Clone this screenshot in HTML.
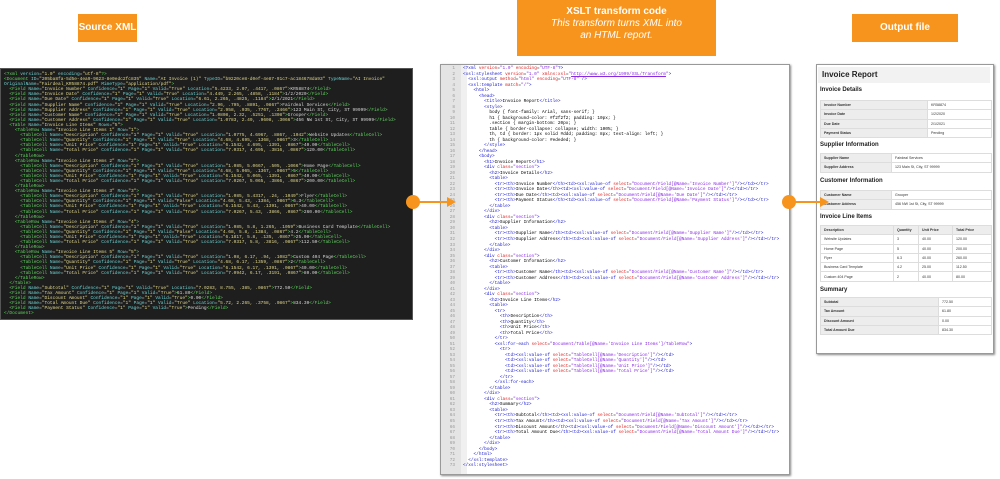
<!DOCTYPE html>
<html><head><meta charset="utf-8"><style>
*{margin:0;padding:0;box-sizing:border-box}
body{width:1000px;height:479px;background:#fff;position:relative;overflow:hidden;font-family:"Liberation Sans",sans-serif}
.btn{position:absolute;background:#f7941d;color:#fff;text-align:center;font-weight:bold;font-family:"Liberation Sans",sans-serif}
#src{left:0;top:68px;width:413px;height:252px;background:#1e1e1e;border:1px solid #555;padding:3px 0 0 3px;font-family:"Liberation Mono",monospace;font-size:4.5px;line-height:5.1px;color:#d8d8d8;white-space:pre;overflow:hidden}
#src .t{color:#5fd35f}#src .a{color:#6ccfcf}#src .v{color:#e0d78a}
#mid{left:440px;top:64px;width:350px;height:411px;background:#fff;border:1px solid #999;box-shadow:1px 1px 2px #888;overflow:hidden}
#gut{position:absolute;left:0;top:0;width:20px;height:100%;background:#e4e4e4}
#fold{position:absolute;left:20px;top:0;width:6px;height:100%;background:#f0f0f0}
#code{position:absolute;left:0;top:1px;font-family:"Liberation Mono",monospace;font-size:4.4px;line-height:5.52px;white-space:pre;color:#000}
#code .n{display:inline-block;width:14px;text-align:right;color:#999;margin-right:8px}
#code .t{color:#2020d0}#code .a{color:#e02020}#code .v{color:#8a2be2}
#out{left:816px;top:64px;width:178px;height:290px;background:#fff;border:1px solid #999;box-shadow:1px 1px 2px #888}
.abs{position:absolute}
h1{position:absolute;left:818px;top:67px;width:172px;height:16px;background:#f2f2f2;font-size:8px;font-weight:bold;padding:3px 0 0 4px;color:#222}
h2{position:absolute;left:820px;font-size:6px;font-weight:bold;color:#222}
table{position:absolute;left:820px;width:172px;border-collapse:collapse;font-size:3.6px}
td,th{border:0.5px solid #ddd;height:9.3px;padding:0 0 0 3px;text-align:left;font-weight:normal;color:#333}
th{background:#ededed;font-weight:bold}
</style></head><body>
<div class="btn" style="left:78px;top:14px;width:59px;height:28px;font-size:10px;line-height:28px">Source XML</div>
<div class="btn" style="left:517px;top:0;width:199px;height:56px;font-size:10px;line-height:12px;padding-top:6px">XSLT transform code<br><span style="font-weight:normal;font-style:italic">This transform turns XML into<br>an HTML report.</span></div>
<div class="btn" style="left:852px;top:14px;width:106px;height:28px;font-size:10px;line-height:28px">Output file</div>

<div id="src" class="abs"><span class="t">&lt;?xml</span> <span class="a">version</span>=<span class="v">"1.0"</span> <span class="a">encoding</span>=<span class="v">"utf-8"</span><span class="t">?&gt;</span>
<span class="t">&lt;Document</span> <span class="a">ID</span>=<span class="v">"205ba8fa-5d5e-4ea9-9623-8e0edc2fc835"</span> <span class="a">Name</span>=<span class="v">"AI Invoice (1)"</span> <span class="a">TypeID</span>=<span class="v">"b9220ce8-d0ef-4e87-91c7-ac184678da93"</span> <span class="a">TypeName</span>=<span class="v">"AI Invoice"</span>
<span class="a">OriginalName</span>=<span class="v">"Fairdeal_KR58874.pdf"</span> <span class="a">MimeType</span>=<span class="v">"application/pdf"</span><span class="t">&gt;</span>
  <span class="t">&lt;Field</span> <span class="a">Name</span>=<span class="v">"Invoice Number"</span> <span class="a">Confidence</span>=<span class="v">"1"</span> <span class="a">Page</span>=<span class="v">"1"</span> <span class="a">Valid</span>=<span class="v">"True"</span> <span class="a">Location</span>=<span class="v">"5.4233, 2.07, .4417, .0867"</span><span class="t">&gt;</span>KR58874<span class="t">&lt;/Field&gt;</span>
  <span class="t">&lt;Field</span> <span class="a">Name</span>=<span class="v">"Invoice Date"</span> <span class="a">Confidence</span>=<span class="v">"1"</span> <span class="a">Page</span>=<span class="v">"1"</span> <span class="a">Valid</span>=<span class="v">"True"</span> <span class="a">Location</span>=<span class="v">"4.449, 2.265, .4858, .1184"</span><span class="t">&gt;</span>1/2/2020<span class="t">&lt;/Field&gt;</span>
  <span class="t">&lt;Field</span> <span class="a">Name</span>=<span class="v">"Due Date"</span> <span class="a">Confidence</span>=<span class="v">"1"</span> <span class="a">Page</span>=<span class="v">"1"</span> <span class="a">Valid</span>=<span class="v">"True"</span> <span class="a">Location</span>=<span class="v">"6.61, 2.265, .4825, .1184"</span><span class="t">&gt;</span>2/1/2021<span class="t">&lt;/Field&gt;</span>
  <span class="t">&lt;Field</span> <span class="a">Name</span>=<span class="v">"Supplier Name"</span> <span class="a">Confidence</span>=<span class="v">"1"</span> <span class="a">Page</span>=<span class="v">"1"</span> <span class="a">Valid</span>=<span class="v">"True"</span> <span class="a">Location</span>=<span class="v">"2.96, .795, .8891, .0867"</span><span class="t">&gt;</span>Fairdeal Services<span class="t">&lt;/Field&gt;</span>
  <span class="t">&lt;Field</span> <span class="a">Name</span>=<span class="v">"Supplier Address"</span> <span class="a">Confidence</span>=<span class="v">"1"</span> <span class="a">Page</span>=<span class="v">"1"</span> <span class="a">Valid</span>=<span class="v">"True"</span> <span class="a">Location</span>=<span class="v">"2.958, .935, .7767, .2466"</span><span class="t">&gt;</span>123 Main St, City, ST 99999<span class="t">&lt;/Field&gt;</span>
  <span class="t">&lt;Field</span> <span class="a">Name</span>=<span class="v">"Customer Name"</span> <span class="a">Confidence</span>=<span class="v">"1"</span> <span class="a">Page</span>=<span class="v">"1"</span> <span class="a">Valid</span>=<span class="v">"True"</span> <span class="a">Location</span>=<span class="v">"1.0808, 2.32, .5251, .1308"</span><span class="t">&gt;</span>Grooper<span class="t">&lt;/Field&gt;</span>
  <span class="t">&lt;Field</span> <span class="a">Name</span>=<span class="v">"Customer Address"</span> <span class="a">Confidence</span>=<span class="v">"1"</span> <span class="a">Page</span>=<span class="v">"1"</span> <span class="a">Valid</span>=<span class="v">"True"</span> <span class="a">Location</span>=<span class="v">"1.0783, 2.49, .9608, .3066"</span><span class="t">&gt;</span>456 NW 1st St, City, ST 99999<span class="t">&lt;/Field&gt;</span>
  <span class="t">&lt;Table</span> <span class="a">Name</span>=<span class="v">"Invoice Line Items"</span> <span class="a">Rows</span>=<span class="v">"5"</span><span class="t">&gt;</span>
    <span class="t">&lt;TableRow</span> <span class="a">Name</span>=<span class="v">"Invoice Line Items 1"</span> <span class="a">Row</span>=<span class="v">"1"</span><span class="t">&gt;</span>
      <span class="t">&lt;TableCell</span> <span class="a">Name</span>=<span class="v">"Description"</span> <span class="a">Confidence</span>=<span class="v">"1"</span> <span class="a">Page</span>=<span class="v">"1"</span> <span class="a">Valid</span>=<span class="v">"True"</span> <span class="a">Location</span>=<span class="v">"1.0775, 4.6967, .8867, .1042"</span><span class="t">&gt;</span>Website Updates<span class="t">&lt;/TableCell&gt;</span>
      <span class="t">&lt;TableCell</span> <span class="a">Name</span>=<span class="v">"Quantity"</span> <span class="a">Confidence</span>=<span class="v">"1"</span> <span class="a">Page</span>=<span class="v">"1"</span> <span class="a">Valid</span>=<span class="v">"True"</span> <span class="a">Location</span>=<span class="v">"4.68, 4.695, .1368, .0867"</span><span class="t">&gt;</span>3<span class="t">&lt;/TableCell&gt;</span>
      <span class="t">&lt;TableCell</span> <span class="a">Name</span>=<span class="v">"Unit Price"</span> <span class="a">Confidence</span>=<span class="v">"1"</span> <span class="a">Page</span>=<span class="v">"1"</span> <span class="a">Valid</span>=<span class="v">"True"</span> <span class="a">Location</span>=<span class="v">"6.1542, 4.695, .1391, .0867"</span><span class="t">&gt;</span>40.00<span class="t">&lt;/TableCell&gt;</span>
      <span class="t">&lt;TableCell</span> <span class="a">Name</span>=<span class="v">"Total Price"</span> <span class="a">Confidence</span>=<span class="v">"1"</span> <span class="a">Page</span>=<span class="v">"1"</span> <span class="a">Valid</span>=<span class="v">"True"</span> <span class="a">Location</span>=<span class="v">"7.0317, 4.695, .3816, .0867"</span><span class="t">&gt;</span>120.00<span class="t">&lt;/TableCell&gt;</span>
    <span class="t">&lt;/TableRow&gt;</span>
    <span class="t">&lt;TableRow</span> <span class="a">Name</span>=<span class="v">"Invoice Line Items 2"</span> <span class="a">Row</span>=<span class="v">"2"</span><span class="t">&gt;</span>
      <span class="t">&lt;TableCell</span> <span class="a">Name</span>=<span class="v">"Description"</span> <span class="a">Confidence</span>=<span class="v">"1"</span> <span class="a">Page</span>=<span class="v">"1"</span> <span class="a">Valid</span>=<span class="v">"True"</span> <span class="a">Location</span>=<span class="v">"1.085, 5.0667, .505, .1066"</span><span class="t">&gt;</span>Home Page<span class="t">&lt;/TableCell&gt;</span>
      <span class="t">&lt;TableCell</span> <span class="a">Name</span>=<span class="v">"Quantity"</span> <span class="a">Confidence</span>=<span class="v">"1"</span> <span class="a">Page</span>=<span class="v">"1"</span> <span class="a">Valid</span>=<span class="v">"True"</span> <span class="a">Location</span>=<span class="v">"4.68, 5.065, .1367, .0867"</span><span class="t">&gt;</span>5<span class="t">&lt;/TableCell&gt;</span>
      <span class="t">&lt;TableCell</span> <span class="a">Name</span>=<span class="v">"Unit Price"</span> <span class="a">Confidence</span>=<span class="v">"1"</span> <span class="a">Page</span>=<span class="v">"1"</span> <span class="a">Valid</span>=<span class="v">"True"</span> <span class="a">Location</span>=<span class="v">"6.1542, 5.065, .1391, .0867"</span><span class="t">&gt;</span>40.00<span class="t">&lt;/TableCell&gt;</span>
      <span class="t">&lt;TableCell</span> <span class="a">Name</span>=<span class="v">"Total Price"</span> <span class="a">Confidence</span>=<span class="v">"1"</span> <span class="a">Page</span>=<span class="v">"1"</span> <span class="a">Valid</span>=<span class="v">"True"</span> <span class="a">Location</span>=<span class="v">"7.0267, 5.065, .3866, .0867"</span><span class="t">&gt;</span>200.00<span class="t">&lt;/TableCell&gt;</span>
    <span class="t">&lt;/TableRow&gt;</span>
    <span class="t">&lt;TableRow</span> <span class="a">Name</span>=<span class="v">"Invoice Line Items 3"</span> <span class="a">Row</span>=<span class="v">"3"</span><span class="t">&gt;</span>
      <span class="t">&lt;TableCell</span> <span class="a">Name</span>=<span class="v">"Description"</span> <span class="a">Confidence</span>=<span class="v">"1"</span> <span class="a">Page</span>=<span class="v">"1"</span> <span class="a">Valid</span>=<span class="v">"True"</span> <span class="a">Location</span>=<span class="v">"1.085, 5.4317, .24, .1049"</span><span class="t">&gt;</span>Flyer<span class="t">&lt;/TableCell&gt;</span>
      <span class="t">&lt;TableCell</span> <span class="a">Name</span>=<span class="v">"Quantity"</span> <span class="a">Confidence</span>=<span class="v">"1"</span> <span class="a">Page</span>=<span class="v">"1"</span> <span class="a">Valid</span>=<span class="v">"False"</span> <span class="a">Location</span>=<span class="v">"4.68, 5.43, .1384, .0867"</span><span class="t">&gt;</span>6.3<span class="t">&lt;/TableCell&gt;</span>
      <span class="t">&lt;TableCell</span> <span class="a">Name</span>=<span class="v">"Unit Price"</span> <span class="a">Confidence</span>=<span class="v">"1"</span> <span class="a">Page</span>=<span class="v">"1"</span> <span class="a">Valid</span>=<span class="v">"True"</span> <span class="a">Location</span>=<span class="v">"6.1542, 5.43, .1391, .0867"</span><span class="t">&gt;</span>40.00<span class="t">&lt;/TableCell&gt;</span>
      <span class="t">&lt;TableCell</span> <span class="a">Name</span>=<span class="v">"Total Price"</span> <span class="a">Confidence</span>=<span class="v">"1"</span> <span class="a">Page</span>=<span class="v">"1"</span> <span class="a">Valid</span>=<span class="v">"True"</span> <span class="a">Location</span>=<span class="v">"7.0267, 5.43, .3866, .0867"</span><span class="t">&gt;</span>260.00<span class="t">&lt;/TableCell&gt;</span>
    <span class="t">&lt;/TableRow&gt;</span>
    <span class="t">&lt;TableRow</span> <span class="a">Name</span>=<span class="v">"Invoice Line Items 4"</span> <span class="a">Row</span>=<span class="v">"4"</span><span class="t">&gt;</span>
      <span class="t">&lt;TableCell</span> <span class="a">Name</span>=<span class="v">"Description"</span> <span class="a">Confidence</span>=<span class="v">"1"</span> <span class="a">Page</span>=<span class="v">"1"</span> <span class="a">Valid</span>=<span class="v">"True"</span> <span class="a">Location</span>=<span class="v">"1.085, 5.8, 1.265, .1059"</span><span class="t">&gt;</span>Business Card Template<span class="t">&lt;/TableCell&gt;</span>
      <span class="t">&lt;TableCell</span> <span class="a">Name</span>=<span class="v">"Quantity"</span> <span class="a">Confidence</span>=<span class="v">"1"</span> <span class="a">Page</span>=<span class="v">"1"</span> <span class="a">Valid</span>=<span class="v">"False"</span> <span class="a">Location</span>=<span class="v">"4.68, 5.8, .1384, .0867"</span><span class="t">&gt;</span>4.2<span class="t">&lt;/TableCell&gt;</span>
      <span class="t">&lt;TableCell</span> <span class="a">Name</span>=<span class="v">"Unit Price"</span> <span class="a">Confidence</span>=<span class="v">"1"</span> <span class="a">Page</span>=<span class="v">"1"</span> <span class="a">Valid</span>=<span class="v">"True"</span> <span class="a">Location</span>=<span class="v">"6.1817, 5.8, .135, .0867"</span><span class="t">&gt;</span>25.00<span class="t">&lt;/TableCell&gt;</span>
      <span class="t">&lt;TableCell</span> <span class="a">Name</span>=<span class="v">"Total Price"</span> <span class="a">Confidence</span>=<span class="v">"1"</span> <span class="a">Page</span>=<span class="v">"1"</span> <span class="a">Valid</span>=<span class="v">"True"</span> <span class="a">Location</span>=<span class="v">"7.0317, 5.8, .3816, .0867"</span><span class="t">&gt;</span>112.50<span class="t">&lt;/TableCell&gt;</span>
    <span class="t">&lt;/TableRow&gt;</span>
    <span class="t">&lt;TableRow</span> <span class="a">Name</span>=<span class="v">"Invoice Line Items 5"</span> <span class="a">Row</span>=<span class="v">"5"</span><span class="t">&gt;</span>
      <span class="t">&lt;TableCell</span> <span class="a">Name</span>=<span class="v">"Description"</span> <span class="a">Confidence</span>=<span class="v">"1"</span> <span class="a">Page</span>=<span class="v">"1"</span> <span class="a">Valid</span>=<span class="v">"True"</span> <span class="a">Location</span>=<span class="v">"1.08, 6.17, .94, .1082"</span><span class="t">&gt;</span>Custom 404 Page<span class="t">&lt;/TableCell&gt;</span>
      <span class="t">&lt;TableCell</span> <span class="a">Name</span>=<span class="v">"Quantity"</span> <span class="a">Confidence</span>=<span class="v">"1"</span> <span class="a">Page</span>=<span class="v">"1"</span> <span class="a">Valid</span>=<span class="v">"True"</span> <span class="a">Location</span>=<span class="v">"4.68, 6.17, .1359, .0867"</span><span class="t">&gt;</span>2<span class="t">&lt;/TableCell&gt;</span>
      <span class="t">&lt;TableCell</span> <span class="a">Name</span>=<span class="v">"Unit Price"</span> <span class="a">Confidence</span>=<span class="v">"1"</span> <span class="a">Page</span>=<span class="v">"1"</span> <span class="a">Valid</span>=<span class="v">"True"</span> <span class="a">Location</span>=<span class="v">"6.1542, 6.17, .1391, .0867"</span><span class="t">&gt;</span>40.00<span class="t">&lt;/TableCell&gt;</span>
      <span class="t">&lt;TableCell</span> <span class="a">Name</span>=<span class="v">"Total Price"</span> <span class="a">Confidence</span>=<span class="v">"1"</span> <span class="a">Page</span>=<span class="v">"1"</span> <span class="a">Valid</span>=<span class="v">"True"</span> <span class="a">Location</span>=<span class="v">"7.0942, 6.17, .3191, .0867"</span><span class="t">&gt;</span>80.00<span class="t">&lt;/TableCell&gt;</span>
    <span class="t">&lt;/TableRow&gt;</span>
  <span class="t">&lt;/Table&gt;</span>
  <span class="t">&lt;Field</span> <span class="a">Name</span>=<span class="v">"Subtotal"</span> <span class="a">Confidence</span>=<span class="v">"1"</span> <span class="a">Page</span>=<span class="v">"1"</span> <span class="a">Valid</span>=<span class="v">"True"</span> <span class="a">Location</span>=<span class="v">"7.0283, 8.755, .385, .0867"</span><span class="t">&gt;</span>772.50<span class="t">&lt;/Field&gt;</span>
  <span class="t">&lt;Field</span> <span class="a">Name</span>=<span class="v">"Tax Amount"</span> <span class="a">Confidence</span>=<span class="v">"1"</span> <span class="a">Page</span>=<span class="v">"1"</span> <span class="a">Valid</span>=<span class="v">"True"</span><span class="t">&gt;</span>61.80<span class="t">&lt;/Field&gt;</span>
  <span class="t">&lt;Field</span> <span class="a">Name</span>=<span class="v">"Discount Amount"</span> <span class="a">Confidence</span>=<span class="v">"1"</span> <span class="a">Page</span>=<span class="v">"1"</span> <span class="a">Valid</span>=<span class="v">"True"</span><span class="t">&gt;</span>0.00<span class="t">&lt;/Field&gt;</span>
  <span class="t">&lt;Field</span> <span class="a">Name</span>=<span class="v">"Total Amount Due"</span> <span class="a">Confidence</span>=<span class="v">"1"</span> <span class="a">Page</span>=<span class="v">"1"</span> <span class="a">Valid</span>=<span class="v">"True"</span> <span class="a">Location</span>=<span class="v">"5.72, 2.265, .3758, .0867"</span><span class="t">&gt;</span>834.30<span class="t">&lt;/Field&gt;</span>
  <span class="t">&lt;Field</span> <span class="a">Name</span>=<span class="v">"Payment Status"</span> <span class="a">Confidence</span>=<span class="v">"1"</span> <span class="a">Page</span>=<span class="v">"1"</span> <span class="a">Valid</span>=<span class="v">"True"</span><span class="t">&gt;</span>Pending<span class="t">&lt;/Field&gt;</span>
<span class="t">&lt;/Document&gt;</span></div>

<div id="mid" class="abs"><div id="gut"></div><div id="fold"></div>
<div id="code"><span class="n">1</span><span class="t">&lt;?xml</span> <span class="a">version</span>=<span class="v">"1.0"</span> <span class="a">encoding</span>=<span class="v">"UTF-8"</span><span class="t">?&gt;</span>
<span class="n">2</span><span class="t">&lt;xsl:stylesheet</span> <span class="a">version</span>=<span class="v">"1.0"</span> <span class="a">xmlns:xsl</span>=<span class="v">"<u>http://www.w3.org/1999/XSL/Transform</u>"</span><span class="t">&gt;</span>
<span class="n">3</span>  <span class="t">&lt;xsl:output</span> <span class="a">method</span>=<span class="v">"html"</span> <span class="a">encoding</span>=<span class="v">"UTF-8"</span> <span class="t">/&gt;</span>
<span class="n">4</span>  <span class="t">&lt;xsl:template</span> <span class="a">match</span>=<span class="v">"/"</span><span class="t">&gt;</span>
<span class="n">5</span>    <span class="t">&lt;html&gt;</span>
<span class="n">6</span>      <span class="t">&lt;head&gt;</span>
<span class="n">7</span>        <span class="t">&lt;title&gt;</span>Invoice Report<span class="t">&lt;/title&gt;</span>
<span class="n">8</span>        <span class="t">&lt;style&gt;</span>
<span class="n">9</span>          body { font-family: Arial, sans-serif; }
<span class="n">10</span>          h1 { background-color: #f2f2f2; padding: 10px; }
<span class="n">11</span>          .section { margin-bottom: 20px; }
<span class="n">12</span>          table { border-collapse: collapse; width: 100%; }
<span class="n">13</span>          th, td { border: 1px solid #ddd; padding: 8px; text-align: left; }
<span class="n">14</span>          th { background-color: #ededed; }
<span class="n">15</span>        <span class="t">&lt;/style&gt;</span>
<span class="n">16</span>      <span class="t">&lt;/head&gt;</span>
<span class="n">17</span>      <span class="t">&lt;body&gt;</span>
<span class="n">18</span>        <span class="t">&lt;h1&gt;</span>Invoice Report<span class="t">&lt;/h1&gt;</span>
<span class="n">19</span>        <span class="t">&lt;div</span> <span class="a">class</span>=<span class="v">"section"</span><span class="t">&gt;</span>
<span class="n">20</span>          <span class="t">&lt;h2&gt;</span>Invoice Details<span class="t">&lt;/h2&gt;</span>
<span class="n">21</span>          <span class="t">&lt;table&gt;</span>
<span class="n">22</span>            <span class="t">&lt;tr&gt;&lt;th&gt;</span>Invoice Number<span class="t">&lt;/th&gt;&lt;td&gt;&lt;xsl:value-of</span> <span class="a">select</span>=<span class="v">"Document/Field[@Name='Invoice Number']"</span><span class="t">/&gt;&lt;/td&gt;&lt;/tr&gt;</span>
<span class="n">23</span>            <span class="t">&lt;tr&gt;&lt;th&gt;</span>Invoice Date<span class="t">&lt;/th&gt;&lt;td&gt;&lt;xsl:value-of</span> <span class="a">select</span>=<span class="v">"Document/Field[@Name='Invoice Date']"</span><span class="t">/&gt;&lt;/td&gt;&lt;/tr&gt;</span>
<span class="n">24</span>            <span class="t">&lt;tr&gt;&lt;th&gt;</span>Due Date<span class="t">&lt;/th&gt;&lt;td&gt;&lt;xsl:value-of</span> <span class="a">select</span>=<span class="v">"Document/Field[@Name='Due Date']"</span><span class="t">/&gt;&lt;/td&gt;&lt;/tr&gt;</span>
<span class="n">25</span>            <span class="t">&lt;tr&gt;&lt;th&gt;</span>Payment Status<span class="t">&lt;/th&gt;&lt;td&gt;&lt;xsl:value-of</span> <span class="a">select</span>=<span class="v">"Document/Field[@Name='Payment Status']"</span><span class="t">/&gt;&lt;/td&gt;&lt;/tr&gt;</span>
<span class="n">26</span>          <span class="t">&lt;/table&gt;</span>
<span class="n">27</span>        <span class="t">&lt;/div&gt;</span>
<span class="n">28</span>        <span class="t">&lt;div</span> <span class="a">class</span>=<span class="v">"section"</span><span class="t">&gt;</span>
<span class="n">29</span>          <span class="t">&lt;h2&gt;</span>Supplier Information<span class="t">&lt;/h2&gt;</span>
<span class="n">30</span>          <span class="t">&lt;table&gt;</span>
<span class="n">31</span>            <span class="t">&lt;tr&gt;&lt;th&gt;</span>Supplier Name<span class="t">&lt;/th&gt;&lt;td&gt;&lt;xsl:value-of</span> <span class="a">select</span>=<span class="v">"Document/Field[@Name='Supplier Name']"</span><span class="t">/&gt;&lt;/td&gt;&lt;/tr&gt;</span>
<span class="n">32</span>            <span class="t">&lt;tr&gt;&lt;th&gt;</span>Supplier Address<span class="t">&lt;/th&gt;&lt;td&gt;&lt;xsl:value-of</span> <span class="a">select</span>=<span class="v">"Document/Field[@Name='Supplier Address']"</span><span class="t">/&gt;&lt;/td&gt;&lt;/tr&gt;</span>
<span class="n">33</span>          <span class="t">&lt;/table&gt;</span>
<span class="n">34</span>        <span class="t">&lt;/div&gt;</span>
<span class="n">35</span>        <span class="t">&lt;div</span> <span class="a">class</span>=<span class="v">"section"</span><span class="t">&gt;</span>
<span class="n">36</span>          <span class="t">&lt;h2&gt;</span>Customer Information<span class="t">&lt;/h2&gt;</span>
<span class="n">37</span>          <span class="t">&lt;table&gt;</span>
<span class="n">38</span>            <span class="t">&lt;tr&gt;&lt;th&gt;</span>Customer Name<span class="t">&lt;/th&gt;&lt;td&gt;&lt;xsl:value-of</span> <span class="a">select</span>=<span class="v">"Document/Field[@Name='Customer Name']"</span><span class="t">/&gt;&lt;/td&gt;&lt;/tr&gt;</span>
<span class="n">39</span>            <span class="t">&lt;tr&gt;&lt;th&gt;</span>Customer Address<span class="t">&lt;/th&gt;&lt;td&gt;&lt;xsl:value-of</span> <span class="a">select</span>=<span class="v">"Document/Field[@Name='Customer Address']"</span><span class="t">/&gt;&lt;/td&gt;&lt;/tr&gt;</span>
<span class="n">40</span>          <span class="t">&lt;/table&gt;</span>
<span class="n">41</span>        <span class="t">&lt;/div&gt;</span>
<span class="n">42</span>        <span class="t">&lt;div</span> <span class="a">class</span>=<span class="v">"section"</span><span class="t">&gt;</span>
<span class="n">43</span>          <span class="t">&lt;h2&gt;</span>Invoice Line Items<span class="t">&lt;/h2&gt;</span>
<span class="n">44</span>          <span class="t">&lt;table&gt;</span>
<span class="n">45</span>            <span class="t">&lt;tr&gt;</span>
<span class="n">46</span>              <span class="t">&lt;th&gt;</span>Description<span class="t">&lt;/th&gt;</span>
<span class="n">47</span>              <span class="t">&lt;th&gt;</span>Quantity<span class="t">&lt;/th&gt;</span>
<span class="n">48</span>              <span class="t">&lt;th&gt;</span>Unit Price<span class="t">&lt;/th&gt;</span>
<span class="n">49</span>              <span class="t">&lt;th&gt;</span>Total Price<span class="t">&lt;/th&gt;</span>
<span class="n">50</span>            <span class="t">&lt;/tr&gt;</span>
<span class="n">51</span>            <span class="t">&lt;xsl:for-each</span> <span class="a">select</span>=<span class="v">"Document/Table[@Name='Invoice Line Items']/TableRow"</span><span class="t">&gt;</span>
<span class="n">52</span>              <span class="t">&lt;tr&gt;</span>
<span class="n">53</span>                <span class="t">&lt;td&gt;&lt;xsl:value-of</span> <span class="a">select</span>=<span class="v">"TableCell[@Name='Description']"</span><span class="t">/&gt;&lt;/td&gt;</span>
<span class="n">54</span>                <span class="t">&lt;td&gt;&lt;xsl:value-of</span> <span class="a">select</span>=<span class="v">"TableCell[@Name='Quantity']"</span><span class="t">/&gt;&lt;/td&gt;</span>
<span class="n">55</span>                <span class="t">&lt;td&gt;&lt;xsl:value-of</span> <span class="a">select</span>=<span class="v">"TableCell[@Name='Unit Price']"</span><span class="t">/&gt;&lt;/td&gt;</span>
<span class="n">56</span>                <span class="t">&lt;td&gt;&lt;xsl:value-of</span> <span class="a">select</span>=<span class="v">"TableCell[@Name='Total Price']"</span><span class="t">/&gt;&lt;/td&gt;</span>
<span class="n">57</span>              <span class="t">&lt;/tr&gt;</span>
<span class="n">58</span>            <span class="t">&lt;/xsl:for-each&gt;</span>
<span class="n">59</span>          <span class="t">&lt;/table&gt;</span>
<span class="n">60</span>        <span class="t">&lt;/div&gt;</span>
<span class="n">61</span>        <span class="t">&lt;div</span> <span class="a">class</span>=<span class="v">"section"</span><span class="t">&gt;</span>
<span class="n">62</span>          <span class="t">&lt;h2&gt;</span>Summary<span class="t">&lt;/h2&gt;</span>
<span class="n">63</span>          <span class="t">&lt;table&gt;</span>
<span class="n">64</span>            <span class="t">&lt;tr&gt;&lt;th&gt;</span>Subtotal<span class="t">&lt;/th&gt;&lt;td&gt;&lt;xsl:value-of</span> <span class="a">select</span>=<span class="v">"Document/Field[@Name='Subtotal']"</span><span class="t">/&gt;&lt;/td&gt;&lt;/tr&gt;</span>
<span class="n">65</span>            <span class="t">&lt;tr&gt;&lt;th&gt;</span>Tax Amount<span class="t">&lt;/th&gt;&lt;td&gt;&lt;xsl:value-of</span> <span class="a">select</span>=<span class="v">"Document/Field[@Name='Tax Amount']"</span><span class="t">/&gt;&lt;/td&gt;&lt;/tr&gt;</span>
<span class="n">66</span>            <span class="t">&lt;tr&gt;&lt;th&gt;</span>Discount Amount<span class="t">&lt;/th&gt;&lt;td&gt;&lt;xsl:value-of</span> <span class="a">select</span>=<span class="v">"Document/Field[@Name='Discount Amount']"</span><span class="t">/&gt;&lt;/td&gt;&lt;/tr&gt;</span>
<span class="n">67</span>            <span class="t">&lt;tr&gt;&lt;th&gt;</span>Total Amount Due<span class="t">&lt;/th&gt;&lt;td&gt;&lt;xsl:value-of</span> <span class="a">select</span>=<span class="v">"Document/Field[@Name='Total Amount Due']"</span><span class="t">/&gt;&lt;/td&gt;&lt;/tr&gt;</span>
<span class="n">68</span>          <span class="t">&lt;/table&gt;</span>
<span class="n">69</span>        <span class="t">&lt;/div&gt;</span>
<span class="n">70</span>      <span class="t">&lt;/body&gt;</span>
<span class="n">71</span>    <span class="t">&lt;/html&gt;</span>
<span class="n">72</span>  <span class="t">&lt;/xsl:template&gt;</span>
<span class="n">73</span><span class="t">&lt;/xsl:stylesheet&gt;</span></div></div>

<div id="out" class="abs"></div>
<h1>Invoice Report</h1>
<h2 style="top:87px">Invoice Details</h2>
<table style="top:100px"><tr><th style="width:107px">Invoice Number</th><td>KR58874</td></tr><tr><th>Invoice Date</th><td>1/2/2020</td></tr><tr><th>Due Date</th><td>2/1/2021</td></tr><tr><th>Payment Status</th><td>Pending</td></tr></table>
<h2 style="top:142px">Supplier Information</h2>
<table style="top:153px"><tr><th style="width:71px">Supplier Name</th><td>Fairdeal Services</td></tr><tr><th>Supplier Address</th><td>123 Main St, City, ST 99999</td></tr></table>
<h2 style="top:178px">Customer Information</h2>
<table style="top:190px"><tr><th style="width:71px">Customer Name</th><td>Grooper</td></tr><tr><th>Customer Address</th><td>456 NW 1st St, City, ST 99999</td></tr></table>
<h2 style="top:214px">Invoice Line Items</h2>
<table style="top:225px"><tr><th style="width:73px">Description</th><th style="width:25px">Quantity</th><th style="width:34px">Unit Price</th><th>Total Price</th></tr>
<tr><td>Website Updates</td><td>3</td><td>40.00</td><td>120.00</td></tr>
<tr><td>Home Page</td><td>5</td><td>40.00</td><td>200.00</td></tr>
<tr><td>Flyer</td><td>6.3</td><td>40.00</td><td>260.00</td></tr>
<tr><td>Business Card Template</td><td>4.2</td><td>25.00</td><td>112.50</td></tr>
<tr><td>Custom 404 Page</td><td>2</td><td>40.00</td><td>80.00</td></tr></table>
<h2 style="top:287px">Summary</h2>
<table style="top:297px"><tr><th style="width:118px">Subtotal</th><td>772.50</td></tr><tr><th>Tax Amount</th><td>61.80</td></tr><tr><th>Discount Amount</th><td>0.00</td></tr><tr><th>Total Amount Due</th><td>834.30</td></tr></table>

<svg class="abs" style="left:0;top:0" width="1000" height="479">
<circle cx="413" cy="202" r="7" fill="#f7941d"/>
<line x1="413" y1="202" x2="450" y2="202" stroke="#f7941d" stroke-width="2"/>
<polygon points="447,197 456,202 447,207" fill="#f7941d"/>
<circle cx="789" cy="202" r="7" fill="#f7941d"/>
<line x1="789" y1="202" x2="823" y2="202" stroke="#f7941d" stroke-width="2"/>
<polygon points="820,197 829,202 820,207" fill="#f7941d"/>
</svg>
</body></html>
